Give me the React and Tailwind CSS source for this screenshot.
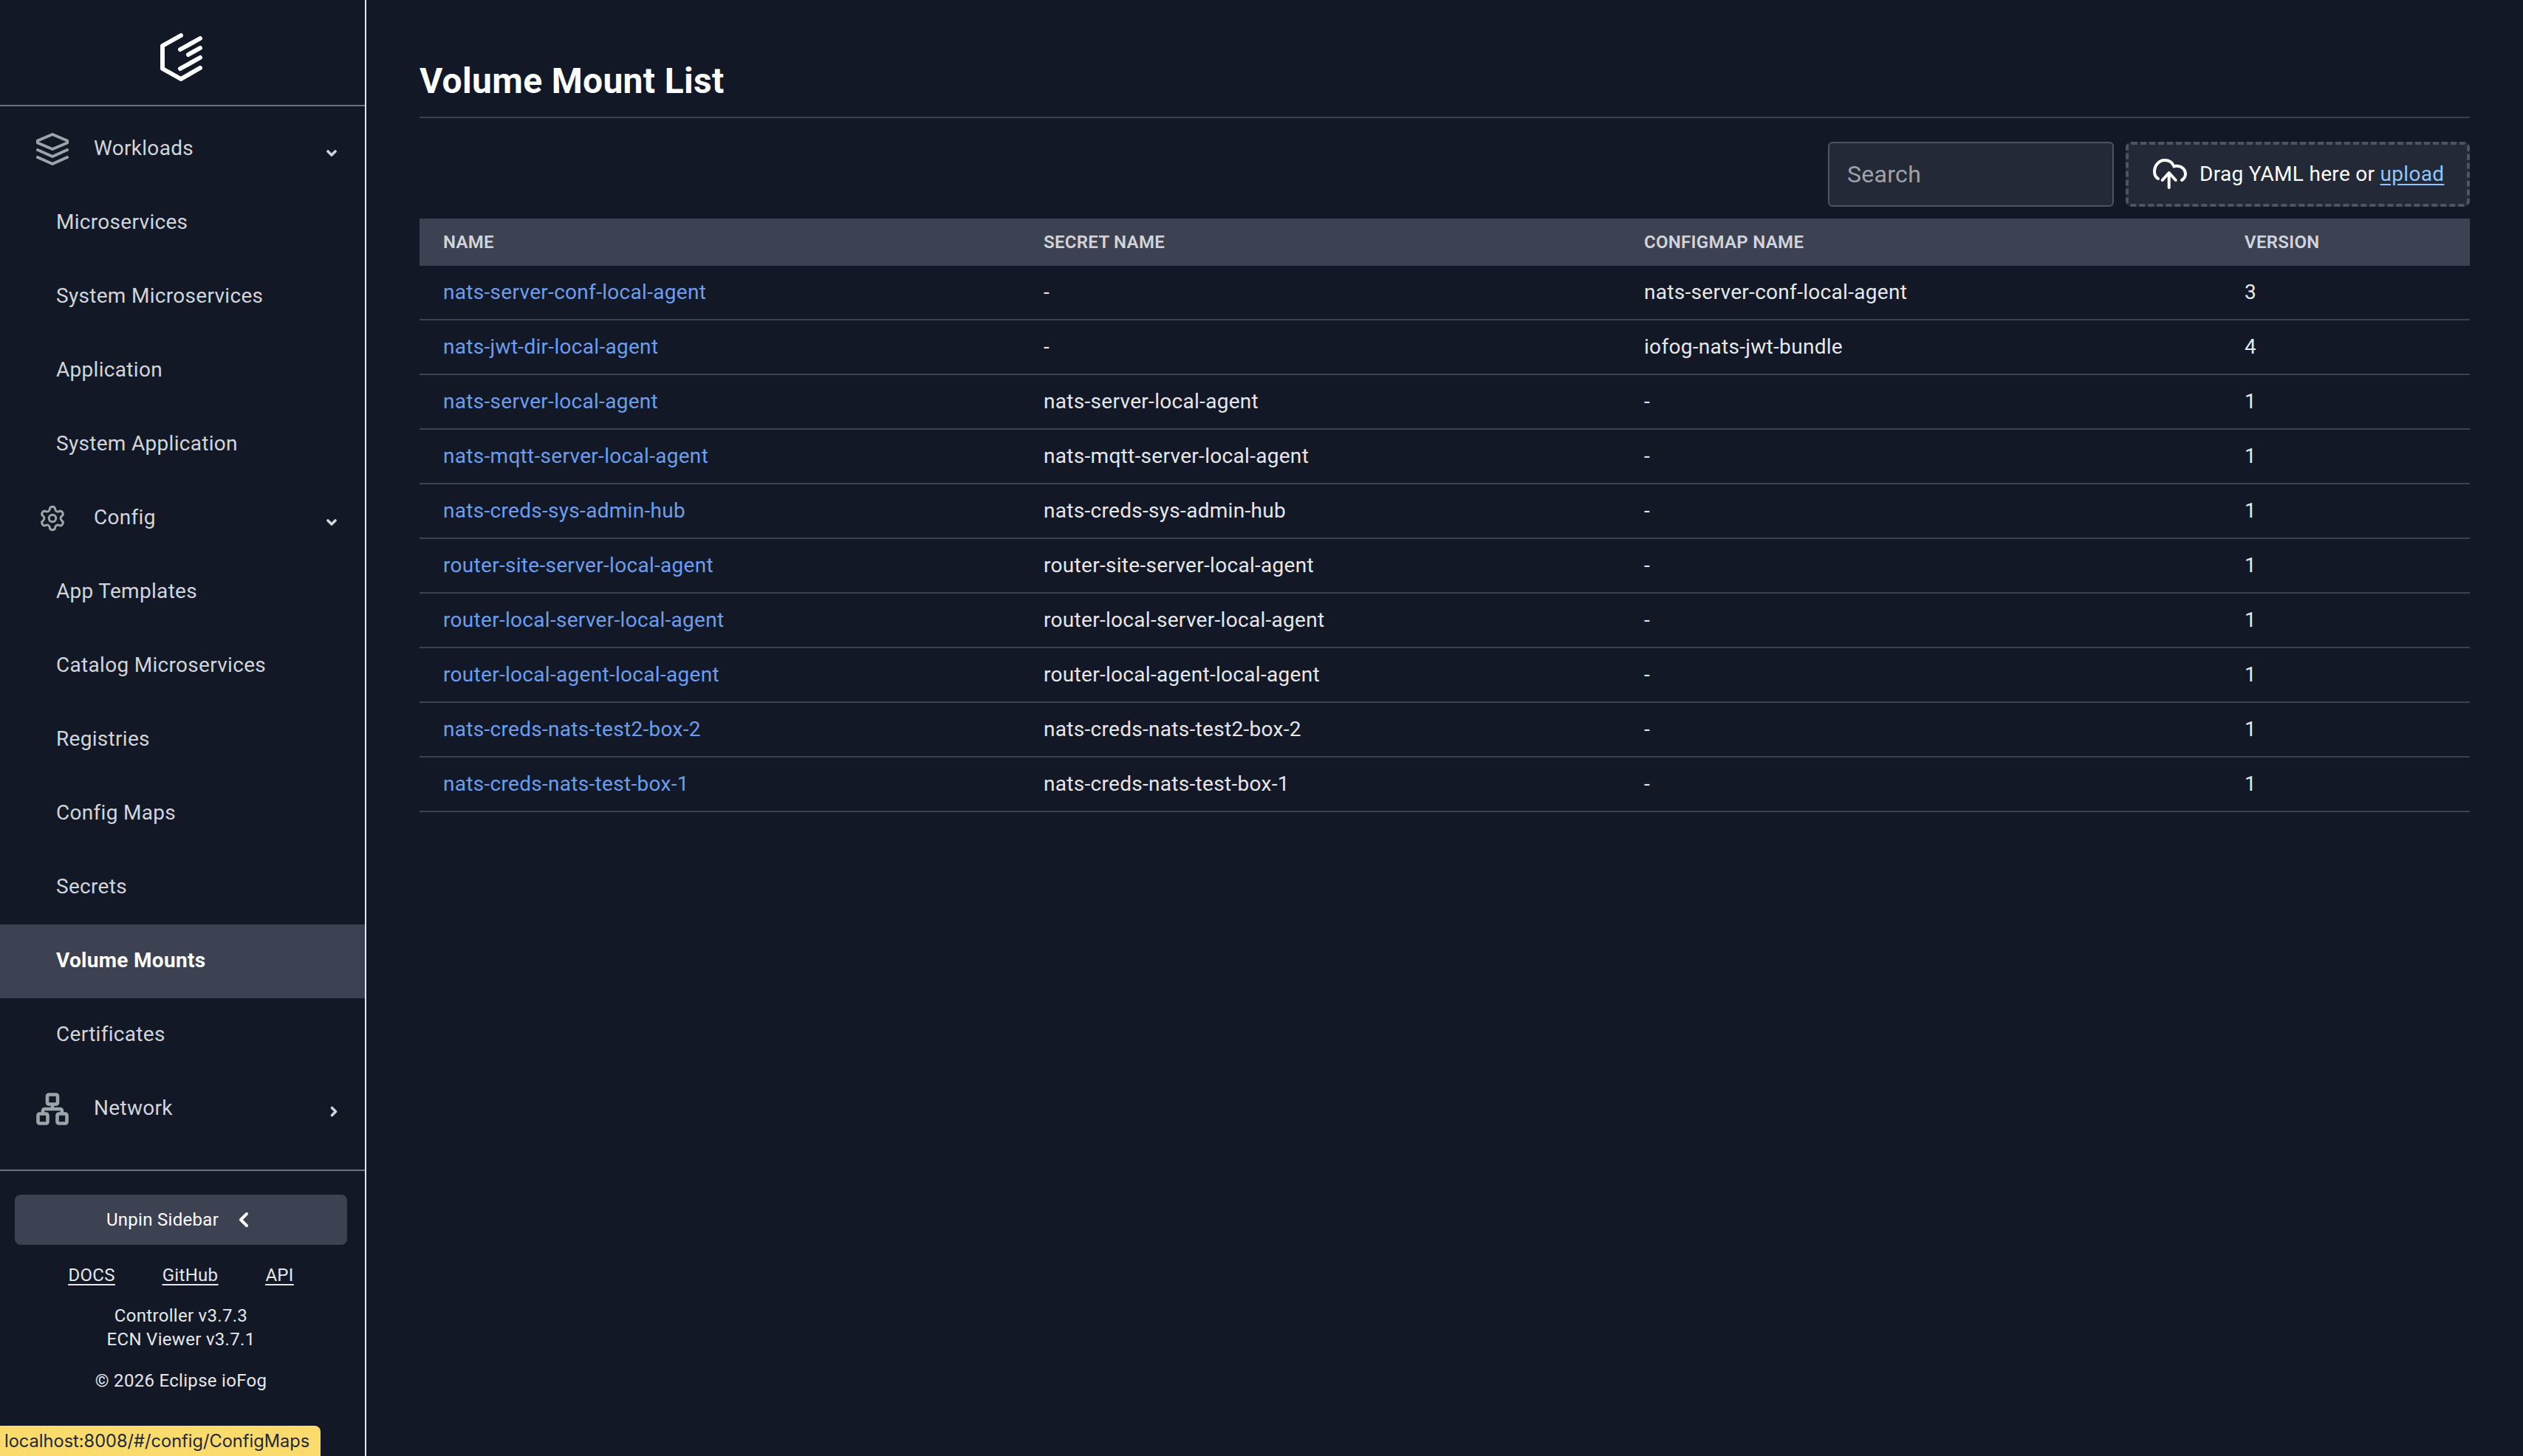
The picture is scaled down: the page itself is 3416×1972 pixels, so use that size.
import { ChevronLeft, Settings } from "lucide-react";

const rows = [
    ["nats-server-conf-local-agent", "-", "nats-server-conf-local-agent", "3"],
    ["nats-jwt-dir-local-agent", "-", "iofog-nats-jwt-bundle", "4"],
    ["nats-server-local-agent", "nats-server-local-agent", "-", "1"],
    ["nats-mqtt-server-local-agent", "nats-mqtt-server-local-agent", "-", "1"],
    ["nats-creds-sys-admin-hub", "nats-creds-sys-admin-hub", "-", "1"],
    ["router-site-server-local-agent", "router-site-server-local-agent", "-", "1"],
    ["router-local-server-local-agent", "router-local-server-local-agent", "-", "1"],
    ["router-local-agent-local-agent", "router-local-agent-local-agent", "-", "1"],
    ["nats-creds-nats-test2-box-2", "nats-creds-nats-test2-box-2", "-", "1"],
    ["nats-creds-nats-test-box-1", "nats-creds-nats-test-box-1", "-", "1"],
];

const workloads = ["Microservices", "System Microservices", "Application", "System Application"];
const config = ["App Templates", "Catalog Microservices", "Registries", "Config Maps", "Secrets", "Volume Mounts", "Certificates"];

function Logo() {
    return (
        <svg width="60" height="66" viewBox="0 0 60 66" fill="none" stroke="white" strokeWidth="6" strokeLinecap="round" strokeLinejoin="round">
            <path d="M28 4 L3 18 L3 49 L28 63 L54 48" />
            <path d="M27 23 L54 8" />
            <path d="M38 30 L54 21" />
            <path d="M27 49 L54 34" />
        </svg>
    );
}

function LayersIcon() {
    return (
        <svg width="44" height="44" viewBox="0 0 44 44" fill="none" stroke="#9aa6a8" strokeWidth="4" strokeLinecap="round" strokeLinejoin="round">
            <path d="M22 2 L42 10.5 Q43 12 42 13.5 L22 22 L2 13.5 Q1 12 2 10.5 Z" />
            <path d="M2 23 L22 32 L42 23" />
            <path d="M2 33 L22 42 L42 33" />
        </svg>
    );
}

function NetworkIcon() {
    return (
        <svg width="44" height="44" viewBox="0 0 44 44" fill="none" stroke="#9aa6a8" strokeWidth="4.6" strokeLinecap="round" strokeLinejoin="round">
            <rect x="15" y="2.5" width="14" height="13" rx="2" />
            <rect x="2.5" y="28.5" width="13" height="13" rx="2" />
            <rect x="28.5" y="28.5" width="13" height="13" rx="2" />
            <path d="M22 16 V22 M9 28 V25 Q9 22 12 22 H32 Q35 22 35 25 V28" />
        </svg>
    );
}

function CaretDown() {
    return (
        <svg width="14" height="11" viewBox="0 0 14 11" fill="none" stroke="#d1d5db" strokeWidth="3.6" strokeLinecap="round" strokeLinejoin="round">
            <path d="M2 3 L7 8 L12 3" />
        </svg>
    );
}

function CaretRight() {
    return (
        <svg className="-mt-[4px] ml-[5px]" width="10" height="15" viewBox="0 0 10 15" fill="none" stroke="#d1d5db" strokeWidth="3.6" strokeLinecap="round" strokeLinejoin="round">
            <path d="M2.5 2.5 L7.5 7.5 L2.5 12.5" />
        </svg>
    );
}

function CloudUpload() {
    return (
        <svg className="shrink-0" width="46" height="42" viewBox="0 0 46 42" fill="none" stroke="white" strokeWidth="4" strokeLinecap="round" strokeLinejoin="round">
            <path d="M7 27 C3.5 25 2 21 2 17.5 C2 9 8 2 16 2 C22 2 26.5 5.5 28.5 10.5 C30 9.5 32 9.5 34 10 C39.5 10.5 44 15 44 20.5 C44 24 42 27 39 29" />
            <path d="M21.7 39 V19 M12.7 29 L21.7 19 L30.7 29" />
        </svg>
    );
}

function Group({ icon, label, caret }) {
    return (
        <div className="flex h-[100px] shrink-0 items-center text-[#d1d5db]">
            <div className="flex w-[127px] shrink-0 justify-center pl-[15px]">{icon}</div>
            <span className="-mt-[2px] flex-1">{label}</span>
            <div className="flex w-[53px] shrink-0 pl-[1px] pt-[10px]">{caret}</div>
        </div>
    );
}

function SubItem({ label }) {
    const active = label === "Volume Mounts";
    return (
        <div className={`flex h-[100px] shrink-0 items-center pb-[2px] pl-[76px] ${active ? "bg-[#3c4252] font-bold text-white" : "text-[#d1d5db]"}`}>
            {label}
        </div>
    );
}

function Sidebar() {
    return (
        <aside className="flex h-screen w-[496px] shrink-0 flex-col border-r-2 border-[#e5e7eb] text-[28px] tracking-[0.3px]">
            <div className="flex h-[144px] shrink-0 items-center justify-center border-b-2 border-[#6b7280] pr-[1px] pt-[12px]">
                <Logo />
            </div>
            <nav className="flex h-[1442px] shrink-0 flex-col overflow-hidden border-b-2 border-[#6b7280] pt-[8px]">
                <Group icon={<LayersIcon />} label="Workloads" caret={<CaretDown />} />
                {workloads.map((label) => (
                    <SubItem key={label} label={label} />
                ))}
                <Group icon={<Settings size={38} color="#9aa6a8" strokeWidth={1.9} />} label="Config" caret={<CaretDown />} />
                {config.map((label) => (
                    <SubItem key={label} label={label} />
                ))}
                <Group icon={<NetworkIcon />} label="Network" caret={<CaretRight />} />
                <div className="flex h-[100px] shrink-0 pl-[51px] pt-[32px]">
                    <svg width="40" height="40" viewBox="0 0 40 40" fill="none" stroke="#9aa6a8" strokeWidth="4">
                        <circle cx="20" cy="20" r="18" />
                    </svg>
                </div>
            </nav>
            <div className="flex flex-1 flex-col items-center pr-[4px] text-[24px] tracking-[0.3px] text-[#e5e7eb]">
                <button className="mt-[32px] flex h-[68px] w-[450px] items-center justify-center gap-[18px] rounded-[8px] bg-[#3c4252] text-white">
                    Unpin Sidebar
                    <ChevronLeft size={32} strokeWidth={3} />
                </button>
                <div className="mt-[25px] flex h-[32px] items-center gap-[64px] underline underline-offset-4">
                    <a>DOCS</a>
                    <a>GitHub</a>
                    <a>API</a>
                </div>
                <div className="mt-[23px] text-center leading-[32px]">
                    <div>Controller v3.7.3</div>
                    <div>ECN Viewer v3.7.1</div>
                </div>
                <div className="mt-[24px] leading-[32px]">© 2026 Eclipse ioFog</div>
            </div>
        </aside>
    );
}

function VolumeTable() {
    return (
        <div className="mt-[16px] text-[28px] tracking-[0.3px]">
            <div className="grid h-[64px] grid-cols-[813px_813px_813px_1fr] items-center bg-[#3c4252] pl-[32px] text-[24px] font-semibold tracking-[0.3px] text-[#d1d5db]">
                <div>NAME</div>
                <div>SECRET NAME</div>
                <div>CONFIGMAP NAME</div>
                <div>VERSION</div>
            </div>
            {rows.map((row) => (
                <div key={row[0]} className="grid h-[74px] grid-cols-[813px_813px_813px_1fr] items-center border-b-2 border-[#3c4252] pl-[32px] text-[#e5e7eb]">
                    <a className="text-[#6c9eec]">{row[0]}</a>
                    <div>{row[1]}</div>
                    <div>{row[2]}</div>
                    <div>{row[3]}</div>
                </div>
            ))}
        </div>
    );
}

export default function App() {
    return (
        <div className="relative flex min-h-screen bg-[#121826] font-['Roboto',sans-serif] text-white">
            <Sidebar />
            <main className="flex-1 px-[72px]">
                <div className="flex h-[160px] items-end border-b-2 border-[#3c4252] pb-[16px]">
                    <h1 className="text-[48px] font-bold leading-[64px] tracking-[0.32px]">Volume Mount List</h1>
                </div>
                <div className="mt-[32px] flex h-[88px] justify-end gap-[16px]">
                    <input
                        type="text"
                        placeholder="Search"
                        className="h-full w-[387px] rounded-[6px] border-2 border-[#4b5563] bg-[#232936] px-[24px] text-[32px] tracking-[0.3px] placeholder:text-[#9ca3af]"
                    />
                    <div className="flex h-full w-[466px] items-center gap-[17px] rounded-[8px] border-4 border-dashed border-[#4b5563] bg-[#232936] pl-[33px] text-[28px] tracking-[0.3px]">
                        <CloudUpload />
                        <span>
                            Drag YAML here or <a className="text-[#93c5fd] underline underline-offset-4">upload</a>
                        </span>
                    </div>
                </div>
                <VolumeTable />
            </main>
            <div className="absolute bottom-0 left-0 flex h-[41px] w-[434px] items-center rounded-tr-[8px] bg-[#fadb6b] pl-[6px] font-['Inter',sans-serif] text-[23.6px] text-[#1f2937]">
                localhost:8008/#/config/ConfigMaps
            </div>
        </div>
    );
}
